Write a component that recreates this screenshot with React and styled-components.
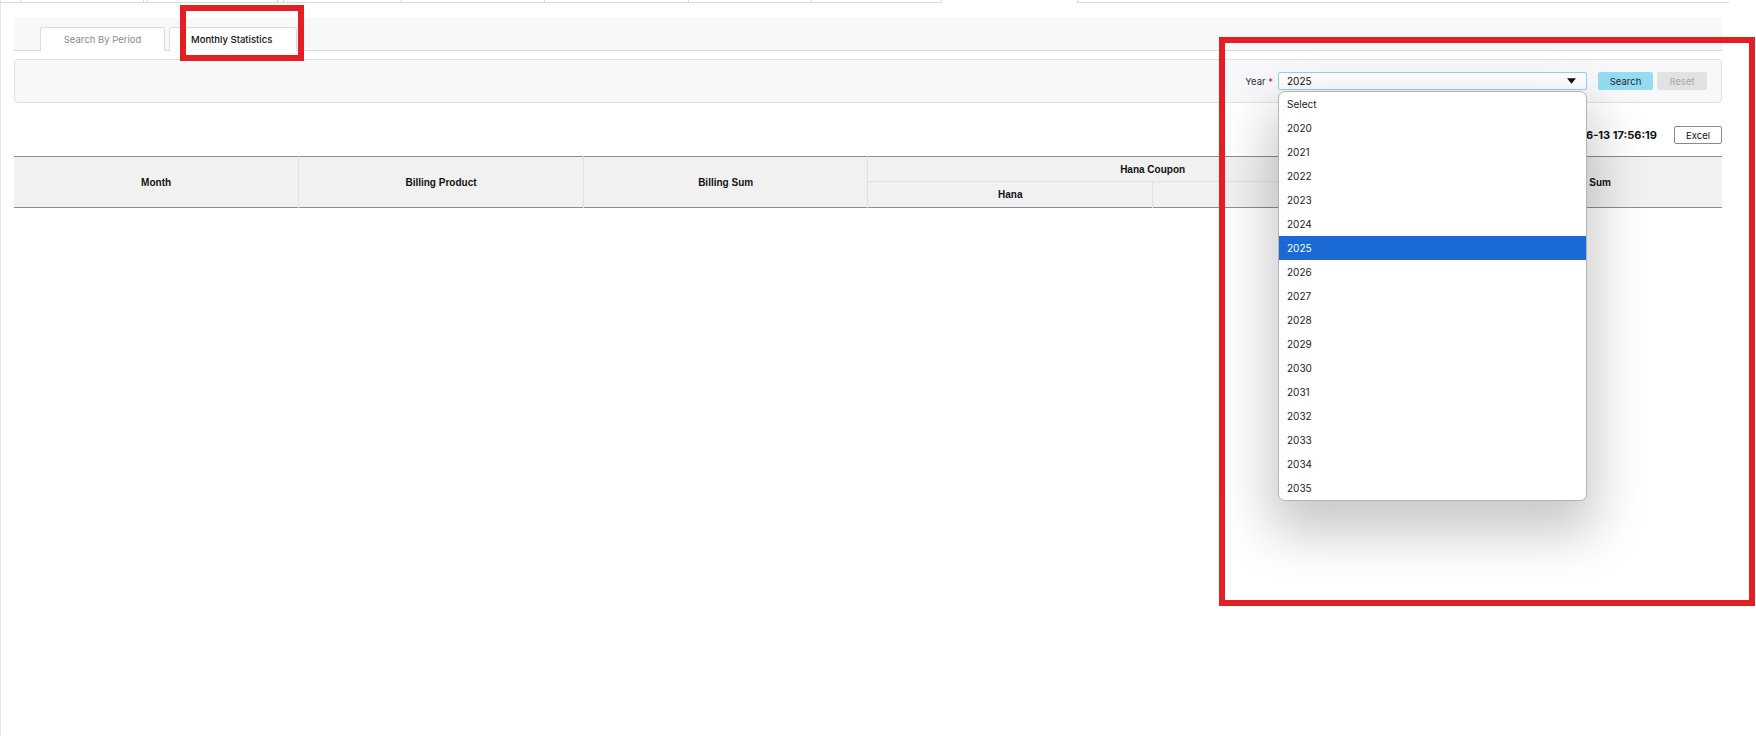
import React from "react";
import styled, { createGlobalStyle } from "styled-components";

const GlobalStyle = createGlobalStyle`
  html, body {
    margin: 0;
    padding: 0;
    background: #ffffff;
  }
  body {
    font-family: Inter, "Noto Sans", sans-serif;
    color: #222;
  }
  * {
    box-sizing: border-box;
  }
`;

const years = [
  "Select", "2020", "2021", "2022", "2023", "2024", "2025", "2026", "2027",
  "2028", "2029", "2030", "2031", "2032", "2033", "2034", "2035",
];

// leftover cells of the grid scrolled above the view
const stripCells = [20, 123, 4, 130, 6, 118, 143, 144, 123, 130];

const App = () => {
  return (
    <Page>
      <GlobalStyle />
      <TopStrip>
        {stripCells.map((w, i) => (
          <StripCell key={i} style={{ width: w }} />
        ))}
        <StripGap />
        <StripCell $open style={{ width: 652 }} />
      </TopStrip>

      <Content>
        <TabBar>
          <Tab>Search By Period</Tab>
          <Tab $active>Monthly Statistics</Tab>
        </TabBar>

        <SearchBox>
          <FieldLabel>
            Year <Required>*</Required>
          </FieldLabel>
          <SelectWrap>
            <SelectBox>
              <span>2025</span>
              <Caret viewBox="0 0 10 6">
                <path d="M0 0 L10 0 L5 6 Z" fill="#111" />
              </Caret>
            </SelectBox>
            <Listbox>
              {years.map((y) => (
                <Option key={y} $selected={y === "2025"}>
                  {y}
                </Option>
              ))}
            </Listbox>
          </SelectWrap>
          <Button $kind="primary">Search</Button>
          <Button $kind="disabled">Reset</Button>
        </SearchBox>

        <InfoRow>
          <Stamp>Inquiry Time : 2025-06-13 17:56:19</Stamp>
          <ExcelButton>Excel</ExcelButton>
        </InfoRow>

        <Grid>
          <colgroup>
            <col />
            <col />
            <col />
            <col />
            <col />
            <col />
          </colgroup>
          <thead>
            <tr>
              <Th rowSpan={2}>Month</Th>
              <Th rowSpan={2}>Billing Product</Th>
              <Th rowSpan={2}>Billing Sum</Th>
              <Th colSpan={2} $top>Hana Coupon</Th>
              <Th rowSpan={2} $last>Coupon Sum</Th>
            </tr>
            <tr>
              <Th $sub>Hana</Th>
              <Th $sub />
            </tr>
          </thead>
        </Grid>
      </Content>

      <Marker style={{ left: 179, top: 5, width: 124, height: 56 }} />
      <Marker style={{ left: 1218, top: 37, width: 536, height: 569 }} />
    </Page>
  );
};

const Page = styled.div`
  position: relative;
  height: 736px;
  border-left: 1px solid #e6e6e6;
  overflow: hidden;
`;

const TopStrip = styled.div`
  display: flex;
  height: 3px;
`;

const StripCell = styled.div`
  height: 3px;
  border-bottom: 1px solid #dadada;
  border-right: ${(p) => (p.$open ? "none" : "1px solid #dadada")};
  border-left: ${(p) => (p.$open ? "1px solid #dadada" : "none")};
`;

const StripGap = styled.div`
  width: 135px;
`;

const Content = styled.div`
  padding: 15px 34px 0 13px;
`;

const TabBar = styled.div`
  display: flex;
  align-items: flex-end;
  gap: 4px;
  height: 33px;
  padding-left: 26px;
  background: #f8f7fa;
  border-bottom: 1px solid #dcdcdc;
`;

const Tab = styled.div`
  display: flex;
  align-items: center;
  justify-content: ${(p) => (p.$active ? "flex-start" : "center")};
  width: ${(p) => (p.$active ? "128px" : "125px")};
  height: 24px;
  padding-left: ${(p) => (p.$active ? "21px" : "0")};
  background: #fff;
  border: 1px solid #dcdcdc;
  border-bottom: none;
  border-radius: 3px 3px 0 0;
  font-size: 9.5px;
  color: ${(p) => (p.$active ? "#111" : "#8a8a8a")};
  font-weight: ${(p) => (p.$active ? 500 : 400)};
  margin-bottom: -1px;
`;

const SearchBox = styled.div`
  display: flex;
  align-items: center;
  justify-content: flex-end;
  height: 44px;
  margin-top: 8px;
  padding-right: 14px;
  background: #f8f7fa;
  border: 1px solid #e0dfe3;
  border-radius: 4px;
`;

const FieldLabel = styled.label`
  font-size: 9.5px;
  color: #333;
  margin-right: 5px;
`;

const Required = styled.span`
  color: #e0201c;
`;

const SelectWrap = styled.div`
  position: relative;
  margin-right: 11px;
`;

const SelectBox = styled.div`
  display: flex;
  align-items: center;
  justify-content: space-between;
  width: 309px;
  height: 18px;
  padding: 0 10px 0 8px;
  background: #fff;
  border: 1px solid #8fd3ee;
  border-radius: 2px;
  font-size: 10px;
  color: #111;
`;

const Caret = styled.svg`
  width: 9px;
  height: 6px;
`;

const Listbox = styled.ul`
  position: absolute;
  top: 19px;
  left: 0;
  z-index: 5;
  width: 309px;
  margin: 0;
  padding: 0;
  list-style: none;
  background: #fff;
  border: 1px solid #b4b4b4;
  border-radius: 7px;
  overflow: hidden;
  box-shadow: 0 24px 52px 8px rgba(0, 0, 0, 0.22);
`;

const Option = styled.li`
  display: flex;
  align-items: center;
  height: 24px;
  padding-left: 8px;
  font-size: 10px;
  color: ${(p) => (p.$selected ? "#fff" : "#222")};
  background: ${(p) => (p.$selected ? "#1b69d4" : "transparent")};
`;

const Button = styled.button`
  height: 18px;
  width: ${(p) => (p.$kind === "primary" ? "55px" : "50px")};
  margin-left: ${(p) => (p.$kind === "primary" ? "0" : "4px")};
  padding: 0;
  border: none;
  border-radius: 2px;
  font-family: inherit;
  font-size: 9.5px;
  color: ${(p) => (p.$kind === "primary" ? "#1d2a33" : "#a9a9a9")};
  background: ${(p) => (p.$kind === "primary" ? "#95dcf2" : "#e2e2e2")};
`;

const InfoRow = styled.div`
  display: flex;
  align-items: center;
  justify-content: flex-end;
  height: 18px;
  margin-top: 23px;
`;

const Stamp = styled.span`
  font-size: 11px;
  font-weight: 700;
  color: #111;
  margin-right: 17px;
`;

const ExcelButton = styled.button`
  width: 48px;
  height: 18px;
  padding: 0;
  background: #fff;
  border: 1px solid #8a8a8a;
  border-radius: 2px;
  font-family: inherit;
  font-size: 9.5px;
  color: #111;
`;

const Grid = styled.table`
  width: 100%;
  margin-top: 12px;
  table-layout: fixed;
  border-collapse: collapse;
  border-top: 1px solid #8c8c8c;
  border-bottom: 1px solid #8c8c8c;
`;

const Th = styled.th`
  height: ${(p) => (p.$top ? "25px" : p.$sub ? "26px" : "51px")};
  padding: 0;
  background: #f1f1f1;
  border-right: ${(p) => (p.$last ? "none" : "1px solid #e0e0e0")};
  border-bottom: ${(p) => (p.$top ? "1px solid #e0e0e0" : "none")};
  font-family: "Liberation Sans", Arial, sans-serif;
  font-size: 10px;
  font-weight: 700;
  color: #111;
  text-align: center;
  vertical-align: middle;
`;

const Marker = styled.div`
  position: absolute;
  z-index: 10;
  border: 6px solid #e41f23;
  pointer-events: none;
`;

export default App;
